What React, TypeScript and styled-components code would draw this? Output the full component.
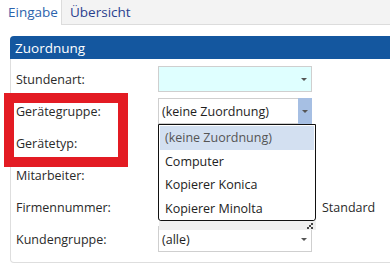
import styled, { createGlobalStyle } from "styled-components";

const GlobalStyle = createGlobalStyle`
  html, body {
    margin: 0;
    padding: 0;
    background: #fff;
    overflow: hidden;
  }
  body {
    font-family: "Open Sans", "Noto Sans", "Liberation Sans", sans-serif;
    font-size: 12.5px;
    color: #222;
  }
`;

const Page = styled.div`
  position: relative;
  width: 390px;
  height: 268px;
  overflow: hidden;
`;

const TabBar = styled.div`
  display: flex;
  height: 25px;
`;

const Tab = styled.div<{ $active?: boolean }>`
  display: flex;
  align-items: center;
  padding: 0 8px 1px 8px;
  font-size: 13.5px;
  color: ${(p) => (p.$active ? "#2d63ad" : "#293f8e")};
  background: ${(p) => (p.$active ? "#fff" : "#f3f3f3")};
  border-left: ${(p) => (p.$active ? "none" : "1px solid #dcdcdc")};
  border-bottom: ${(p) => (p.$active ? "1px solid #fff" : "1px solid #dcdcdc")};
  flex: ${(p) => (p.$active ? "0 0 auto" : "1 1 auto")};
  box-sizing: border-box;
  width: ${(p) => (p.$active ? "61px" : "auto")};
`;

const Panel = styled.div`
  margin: 11px 0 0 10px;
  width: 420px;
  height: 227px;
  border: 1px solid #dedede;
  border-top: none;
  border-radius: 4px 0 0 4px;
  box-sizing: border-box;
`;

const PanelHeader = styled.div`
  height: 23px;
  background: #14579f;
  color: #fff;
  font-size: 13.5px;
  display: flex;
  align-items: center;
  padding-left: 5px;
  border-radius: 4px 0 0 0;
  margin-left: -1px;
`;

const Form = styled.div`
  display: grid;
  grid-template-columns: 143px 154px auto;
  grid-auto-rows: 32px;
  padding: 7px 0 0 4px;
`;

const Label = styled.div`
  height: 26px;
  display: flex;
  align-items: center;
  padding-left: 1px;
  color: #2a2a2a;
`;

const Select = styled.div<{ $bg?: string }>`
  position: relative;
  height: 26px;
  box-sizing: border-box;
  border: 1px solid #cfcfcf;
  background: ${(p) => p.$bg || "#fff"};
  display: flex;
  align-items: center;
  padding-left: 3px;
  color: #1e1e1e;
`;

const ArrowBox = styled.div<{ $focus?: boolean }>`
  position: absolute;
  top: ${(p) => (p.$focus ? "-1px" : "0")};
  right: ${(p) => (p.$focus ? "-1px" : "0")};
  bottom: ${(p) => (p.$focus ? "-1px" : "0")};
  width: 14px;
  background: ${(p) => (p.$focus ? "#a6bfe3" : "transparent")};
  display: flex;
  align-items: center;
  justify-content: center;
`;

const Caret = styled.span`
  width: 0;
  height: 0;
  border-left: 3px solid transparent;
  border-right: 3px solid transparent;
  border-top: 3px solid #555;
`;

const Side = styled.div`
  height: 26px;
  display: flex;
  align-items: center;
  padding-left: 10px;
  color: #2a2a2a;
`;

const Popup = styled.div`
  position: absolute;
  left: 158px;
  top: 124px;
  width: 158px;
  box-sizing: border-box;
  border: 1px solid #111;
  border-radius: 0 0 3px 3px;
  background: #fff;
  padding: 1px 1px 0 1px;
  display: flex;
  flex-direction: column;
  z-index: 2;
`;

const Item = styled.div<{ $selected?: boolean }>`
  height: 23.5px;
  display: flex;
  align-items: center;
  padding-left: 5px;
  background: ${(p) => (p.$selected ? "#d3e0f1" : "#fff")};
  color: ${(p) => (p.$selected ? "#555" : "#222")};
`;

const Resize = styled.div`
  position: absolute;
  left: 159px;
  top: 219px;
  width: 157px;
  height: 11px;
  background: #efefef;
  z-index: 1;
  display: flex;
  justify-content: flex-end;
  align-items: flex-end;
  padding: 0 3px 1px 0;
  box-sizing: border-box;
`;

const Highlight = styled.div`
  position: absolute;
  left: 4px;
  top: 93px;
  width: 124px;
  height: 74px;
  box-sizing: border-box;
  border: 10px solid #e31b23;
  z-index: 3;
  pointer-events: none;
`;

const Arrow = ({ focus }: { focus?: boolean }) => (
  <ArrowBox $focus={focus}>
    <Caret />
  </ArrowBox>
);

export default function App() {
  return (
    <Page>
      <GlobalStyle />
      <TabBar>
        <Tab $active>Eingabe</Tab>
        <Tab>Übersicht</Tab>
      </TabBar>
      <Panel>
        <PanelHeader>Zuordnung</PanelHeader>
        <Form>
          <Label>Stundenart:</Label>
          <Select $bg="#dfffff">
            <Arrow />
          </Select>
          <div />

          <Label>Gerätegruppe:</Label>
          <Select>
            (keine Zuordnung)
            <Arrow focus />
          </Select>
          <div />

          <Label>Gerätetyp:</Label>
          <Select>
            <Arrow />
          </Select>
          <div />

          <Label>Mitarbeiter:</Label>
          <Select>
            <Arrow />
          </Select>
          <div />

          <Label>Firmennummer:</Label>
          <Select />
          <Side>Standard</Side>

          <Label>Kundengruppe:</Label>
          <Select>
            (alle)
            <Arrow />
          </Select>
          <div />
        </Form>
      </Panel>

      <Popup>
        <Item $selected>(keine Zuordnung)</Item>
        <Item>Computer</Item>
        <Item>Kopierer Konica</Item>
        <Item>Kopierer Minolta</Item>
      </Popup>
      <Resize>
        <svg width="6" height="6" viewBox="0 0 6 6">
          <rect x="4" y="0" width="2" height="2" fill="#444" />
          <rect x="0" y="4" width="2" height="2" fill="#444" />
          <rect x="4" y="4" width="2" height="2" fill="#444" />
          <rect x="2" y="2" width="2" height="2" fill="#444" />
        </svg>
      </Resize>
      <Highlight />
    </Page>
  );
}
